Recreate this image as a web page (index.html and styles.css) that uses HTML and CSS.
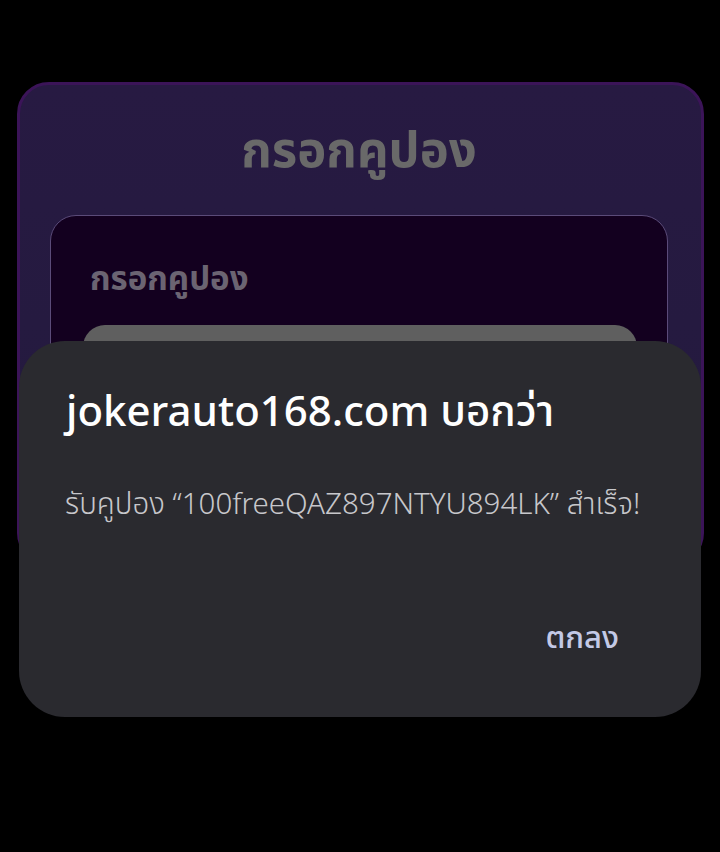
FILE: index.html
```html
<!DOCTYPE html>
<html lang="th">
<head>
    <meta charset="UTF-8">
    <meta name="viewport" content="width=device-width, initial-scale=1.0">
    <title>กรอกคูปอง</title>
    <link rel="stylesheet" href="styles.css">
</head>
<body>

    <div class="page">
        <div class="coupon-card">
            <h1 class="coupon-title">กรอกคูปอง</h1>
            <div class="coupon-form">
                <label class="coupon-label" for="couponInput">กรอกคูปอง</label>
                <div class="coupon-input" id="couponInput"></div>
            </div>
        </div>

        <div class="alert">
            <h2 class="alert-title">jokerauto168.com บอกว่า</h2>
            <p class="alert-message">รับคูปอง “100freeQAZ897NTYU894LK” สำเร็จ!</p>
            <div class="alert-actions">
                <button class="alert-ok">ตกลง</button>
            </div>
        </div>
    </div>

</body>
</html>
```

FILE: styles.css
```css
body {
    margin: 0;
    padding: 0;
    background-color: #000;
    font-family: "Noto Sans Thai", "Noto Sans", "DejaVu Sans", sans-serif;
}

.page {
    position: relative;
    width: 720px;
    height: 852px;
    padding-top: 82px;
    box-sizing: border-box;
    overflow: hidden;
}

.coupon-card {
    margin-left: 17px;
    width: 687px;
    height: 483px;
    box-sizing: border-box;
    background: linear-gradient(180deg, #271a42 0%, #231a3e 100%);
    border: 3px solid #3b1458;
    border-radius: 32px;
    padding: 0 33px 0 30px;
    overflow: hidden;
}

.coupon-title {
    margin: 0;
    height: 130px;
    line-height: 134px;
    text-align: center;
    font-size: 49px;
    font-weight: 700;
    color: #696969;
}

.coupon-form {
    height: 330px;
    box-sizing: border-box;
    background-color: #13001f;
    border: 1px solid #5b4b79;
    border-radius: 26px;
    padding: 40px 30px 0 32px;
}

.coupon-label {
    display: block;
    padding-left: 7px;
    font-size: 33px;
    font-weight: 700;
    color: #6b6472;
    line-height: 48px;
}

.coupon-input {
    margin-top: 21px;
    height: 60px;
    background-color: #5f5f5f;
    border-radius: 22px;
}

.alert {
    position: absolute;
    left: 19px;
    top: 341px;
    width: 682px;
    height: 376px;
    box-sizing: border-box;
    background-color: #2a2a2f;
    border-radius: 46px;
    padding: 44px 40px 0 46px;
    display: flex;
    flex-direction: column;
}

.alert-title {
    margin: 0;
    font-size: 42px;
    font-weight: 500;
    color: #ffffff;
    line-height: 56px;
    padding-left: 1px;
}

.alert-message {
    margin: 44px 0 0 0;
    font-size: 29.5px;
    font-weight: 300;
    color: #c7c7cb;
    line-height: 40px;
    white-space: nowrap;
}

.alert-actions {
    display: flex;
    justify-content: flex-end;
    margin-top: 92px;
}

.alert-ok {
    background: none;
    border: none;
    padding: 0 42px 0 0;
    font-family: inherit;
    font-size: 31px;
    font-weight: 500;
    color: #c3c9e6;
    line-height: 44px;
    cursor: pointer;
}
```
